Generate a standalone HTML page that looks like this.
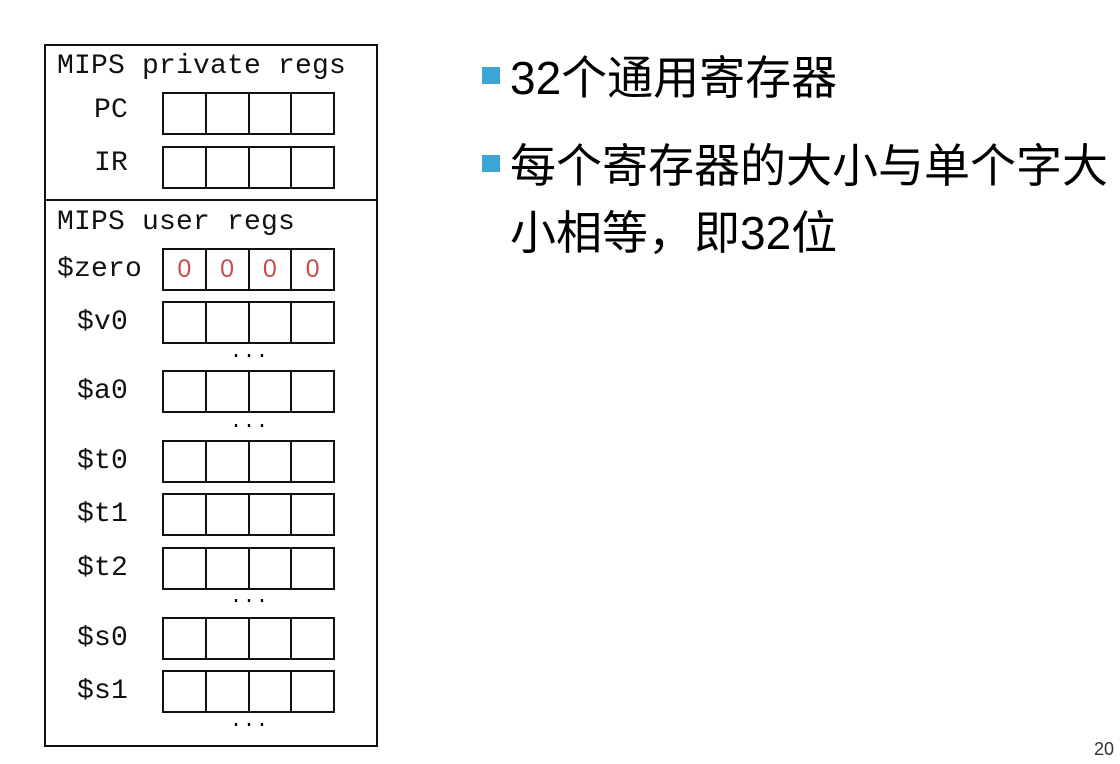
<!DOCTYPE html>
<html><head><meta charset="utf-8"><style>
body{margin:0;width:1120px;height:764px;background:#fff;position:relative;overflow:hidden}
.m{position:absolute;font-family:"Liberation Mono",monospace;font-size:28px;letter-spacing:0.2px;color:#111;line-height:30px;white-space:pre}
.box{position:absolute;border:2px solid #111}
.cells{position:absolute;left:162px;width:173px;height:43px;display:flex;border:2px solid #111;box-sizing:border-box}
.cells div{flex:1;border-right:2px solid #111;font-family:"Liberation Sans",sans-serif;color:#c0504d;font-size:25px;text-align:center;line-height:39px}
.cells div:last-child{border-right:none}
.dots{position:absolute;left:230px;font-family:"Liberation Mono",monospace;font-size:20px;line-height:10px;letter-spacing:1px}
.t{position:absolute;left:510px;font-family:"Liberation Sans","Noto Sans CJK SC",sans-serif;font-size:46px;color:#000;line-height:50px;white-space:nowrap}
.b{position:absolute;left:482px;width:18px;height:17px;background:#3ea6d6}
</style></head><body>
<div class="box" style="left:44px;top:44px;width:330px;height:699px"></div>
<div style="position:absolute;left:44px;top:199px;width:333px;height:2px;background:#111"></div>
<div class="m" style="left:57px;top:52px">MIPS private regs</div>
<div class="m" style="left:94px;top:96px">PC</div>
<div class="m" style="left:94px;top:149px">IR</div>
<div class="m" style="left:57px;top:208px">MIPS user regs</div>
<div class="m" style="left:57px;top:255px">$zero</div>
<div class="m" style="left:77px;top:308px">$v0</div>
<div class="m" style="left:77px;top:377px">$a0</div>
<div class="m" style="left:77px;top:447px">$t0</div>
<div class="m" style="left:77px;top:500px">$t1</div>
<div class="m" style="left:77px;top:554px">$t2</div>
<div class="m" style="left:77px;top:624px">$s0</div>
<div class="m" style="left:77px;top:677px">$s1</div>
<div class="cells" style="top:92px"><div></div><div></div><div></div><div></div></div>
<div class="cells" style="top:146px"><div></div><div></div><div></div><div></div></div>
<div class="cells" style="top:248px"><div>0</div><div>0</div><div>0</div><div>0</div></div>
<div class="cells" style="top:301px"><div></div><div></div><div></div><div></div></div>
<div class="cells" style="top:370px"><div></div><div></div><div></div><div></div></div>
<div class="cells" style="top:440px"><div></div><div></div><div></div><div></div></div>
<div class="cells" style="top:493px"><div></div><div></div><div></div><div></div></div>
<div class="cells" style="top:547px"><div></div><div></div><div></div><div></div></div>
<div class="cells" style="top:617px"><div></div><div></div><div></div><div></div></div>
<div class="cells" style="top:670px"><div></div><div></div><div></div><div></div></div>
<div class="dots" style="top:348px">...</div>
<div class="dots" style="top:418px">...</div>
<div class="dots" style="top:593px">...</div>
<div class="dots" style="top:717px">...</div>
<div class="b" style="top:67px"></div>
<div class="t" style="top:53px">32个通用寄存器</div>
<div class="b" style="top:155px"></div>
<div class="t" style="top:141px">每个寄存器的大小与单个字大</div>
<div class="t" style="top:208px">小相等，即32位</div>
<div style="position:absolute;left:1094px;top:739px;font-family:'Liberation Sans',sans-serif;font-size:18px;color:#333">20</div>
</body></html>
